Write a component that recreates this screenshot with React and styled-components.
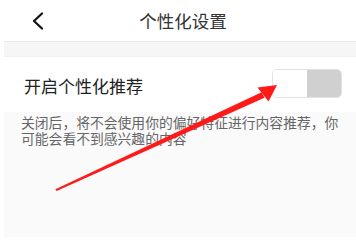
import React from "react";
import styled, { createGlobalStyle } from "styled-components";

const Global = createGlobalStyle`
  html, body { margin: 0; padding: 0; background: #ffffff; }
  body { font-family: "Noto Sans CJK SC", "Noto Sans", sans-serif; }
`;

const Page = styled.div`
  position: relative;
  width: 356px;
  height: 237px;
  overflow: hidden;
  padding-left: 4px;
  box-sizing: border-box;
  display: flex;
  flex-direction: column;
  background: #ffffff;
`;

const Header = styled.div`
  height: 42px;
  flex: none;
  display: grid;
  grid-template-columns: 44px 1fr 38px;
  align-items: center;
  border-bottom: 1px solid #e8e8e8;
  box-sizing: border-box;
`;

const Back = styled.div`
  padding-left: 27px;
  display: flex;
  align-items: center;
  height: 100%;
`;

const Title = styled.div`
  text-align: center;
  font-size: 17.5px;
  color: #333333;
  line-height: 42px;
`;

const Band = styled.div`
  height: 15px;
  flex: none;
  background: #f6f6f6;
  border-bottom: 1px solid #efefef;
  box-sizing: border-box;
`;

const Row = styled.div`
  height: 55px;
  flex: none;
  display: flex;
  align-items: center;
  justify-content: space-between;
  padding: 0 14px 0 20px;
  background: #ffffff;
`;

const Label = styled.div`
  font-size: 17px;
  color: #222222;
  margin-top: 2px;
`;

const Switch = styled.div`
  width: 70px;
  height: 29px;
  box-sizing: border-box;
  border: 1px solid #e2e2e2;
  border-radius: 5px;
  display: flex;
  overflow: hidden;
  margin-top: -2px;
`;

const Half = styled.div`
  flex: 1;
  background: ${(p) => (p.$on ? "#d0d0d0" : "#ffffff")};
`;

const Desc = styled.div`
  flex: 1;
  background: #fafafa;
  padding: 3px 12px 0 17px;
  font-size: 13.8px;
  line-height: 15.5px;
  color: #666666;
`;

const Overlay = styled.svg`
  position: absolute;
  left: 0;
  top: 0;
  width: 356px;
  height: 237px;
  pointer-events: none;
`;

export default function App() {
  return (
    <>
      <Global />
      <Page>
        <Header>
          <Back>
            <svg width="14" height="18" viewBox="0 0 14 18">
              <path d="M11 1.5 L3 9 L11 16.5" fill="none" stroke="#111" strokeWidth="2.2" strokeLinecap="round" strokeLinejoin="round" />
            </svg>
          </Back>
          <Title>个性化设置</Title>
          <div />
        </Header>
        <Band />
        <Row>
          <Label>开启个性化推荐</Label>
          <Switch>
            <Half />
            <Half $on />
          </Switch>
        </Row>
        <Desc>关闭后，将不会使用你的偏好特征进行内容推荐，你可能会看不到感兴趣的内容</Desc>
        <Overlay viewBox="0 0 356 237">
          <polygon points="55.4,189.2 261.5,92.2 264.5,97.8 56.6,190.9" fill="#ff1a1a" />
          <polygon points="257.5,87.5 277,85 268.5,101.5" fill="#ff1a1a" />
        </Overlay>
      </Page>
    </>
  );
}
